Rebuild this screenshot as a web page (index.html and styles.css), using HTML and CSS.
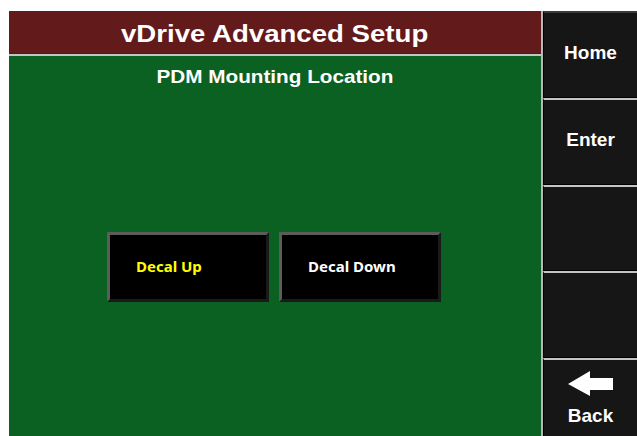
FILE: index.html
```html
<!DOCTYPE html>
<html>
<head>
<meta charset="utf-8">
<title>vDrive Advanced Setup</title>
<link rel="stylesheet" href="styles.css">
</head>
<body>
<div class="screen">
  <main class="main">
    <header class="title-bar"><span class="wide">vDrive Advanced Setup</span></header>
    <section class="content">
      <h2 class="subtitle"><span class="wide">PDM Mounting Location</span></h2>
      <div class="choices">
        <button class="choice selected">Decal Up</button>
        <button class="choice">Decal Down</button>
      </div>
    </section>
  </main>
  <nav class="side">
    <button class="side-btn">Home</button>
    <button class="side-btn">Enter</button>
    <button class="side-btn"></button>
    <button class="side-btn"></button>
    <button class="side-btn back">
      <svg class="back-arrow" width="46" height="25" viewBox="0 0 46 25">
        <polygon points="0,13 22,0 22,7 45,7 45,19 22,19 22,25" fill="#ffffff"/>
      </svg>
      <span>Back</span>
    </button>
  </nav>
</div>
</body>
</html>
```

FILE: styles.css
```css
html, body {
  margin: 0;
  padding: 0;
  background: #ffffff;
}

.screen {
  display: grid;
  grid-template-columns: 532px 96px;
  width: 628px;
  height: 425px;
  padding: 11px 0 0 9px;
  font-family: "Liberation Sans", Arial, sans-serif;
}

.main {
  display: flex;
  flex-direction: column;
}

/* the panel font is drawn slightly widened */
.wide {
  display: inline-block;
  transform: scaleX(1.15);
}

.title-bar {
  height: 42px;
  background: #621a1a;
  color: #ffffff;
  font-weight: bold;
  font-size: 24px;
  line-height: 45px;
  text-align: center;
  border-bottom: 1px solid #2a2a2a;
  box-shadow: 0 2px 0 #c4c4c4;
  margin-bottom: 2px;
}

.content {
  flex: 1;
  background: #0b6121;
  display: flex;
  flex-direction: column;
  align-items: center;
}

.subtitle {
  margin: 9px 0 0;
  color: #ffffff;
  font-size: 18px;
  line-height: 24px;
  font-weight: bold;
}

.choices {
  display: flex;
  gap: 10px;
  margin-top: 143px;
  margin-left: -2px;
}

.choice {
  box-sizing: border-box;
  width: 162px;
  height: 70px;
  background: #000000;
  border-style: solid;
  border-width: 3px;
  border-color: #5c5c5c #1a1a1a #1a1a1a #5c5c5c;
  color: #ffffff;
  font-family: "Noto Sans", "Open Sans", sans-serif;
  font-weight: bold;
  font-size: 15px;
  text-align: left;
  padding: 0 0 2px 26px;
}

.choice.selected {
  color: #ffff00;
}

.side {
  display: flex;
  flex-direction: column;
  background: #000000;
  border-left: 2px solid #b8b8b8;
}

.side-btn {
  box-sizing: border-box;
  height: 85.5px;
  flex: none;
  background: #161616;
  border: none;
  border-top: 2px solid #c4c4c4;
  border-left: 1px solid #000000;
  margin-top: 1px;
  color: #ffffff;
  font-family: "Liberation Sans", Arial, sans-serif;
  font-weight: bold;
  font-size: 19px;
  padding: 0 0 4px 0;
}

.side-btn:first-child {
  height: 86px;
  border-top: 2px solid #3a3a3a;
  margin-top: 0;
}

.side-btn.back {
  flex: 1;
  display: flex;
  flex-direction: column;
  align-items: center;
  justify-content: flex-end;
  padding-bottom: 9px;
  gap: 9px;
}
```
